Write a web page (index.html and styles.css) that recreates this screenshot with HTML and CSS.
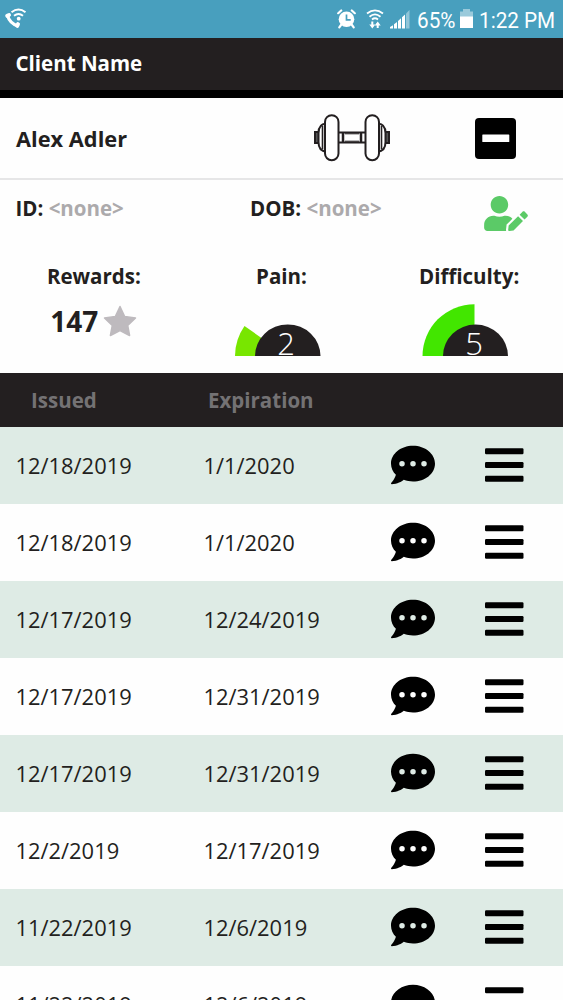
FILE: index.html
```html
<!DOCTYPE html>
<html lang="en">
<head>
<meta charset="utf-8">
<title>Client Name</title>
<link rel="stylesheet" href="styles.css">
</head>
<body>
<svg class="defs" width="0" height="0">
  <symbol id="comment" viewBox="0 0 512 512"><path d="M256 32C114.600 32 0 125.100 0 240c0 49.600 21.400 95 57 130.700C44.500 421.100 2.700 466 2.200 466.500c-2.200 2.300-2.800 5.700-1.500 8.700S4.800 480 8 480c66.300 0 116-31.800 140.600-51.400 32.700 12.300 69 19.400 107.400 19.400 141.400 0 256-93.100 256-208S397.400 32 256 32zM128 272a32 32 0 1 1 0-64 32 32 0 0 1 0 64zm128 0a32 32 0 1 1 0-64 32 32 0 0 1 0 64zm128 0a32 32 0 1 1 0-64 32 32 0 0 1 0 64z"/></symbol>
  <symbol id="bars" viewBox="0 0 39 35"><rect y="0.300" width="38.500" height="6" rx="1.200"/><rect y="14" width="38.500" height="6" rx="1.200"/><rect y="27.700" width="38.500" height="6" rx="1.200"/></symbol>
</svg>
<header class="status">
  <svg class="call" width="24" height="24" viewBox="0 0 24 24" fill="none" stroke="#fff">
    <path d="M3.300 9C4.800 14.500 8.500 18.300 14 20" stroke-width="3"/>
    <path d="M3.200 9.800L5 9M13.200 19.800L14 18.200" stroke-width="4" stroke-linecap="round"/>
    <path d="M7.500 6.200Q14.500 0.800 21.500 6.200" stroke-width="2"/><path d="M10 9.700Q14.500 6.200 19 9.700" stroke-width="2"/>
    <circle cx="14.700" cy="12.700" r="1.900" fill="#fff" stroke="none"/>
  </svg>
  <svg class="alarm" width="19" height="20" viewBox="0 0 19 20">
    <circle cx="9.500" cy="10.300" r="7.800" fill="#fff"/><path d="M9.500 5.500v5.300h4.200" fill="none" stroke="#489fbe" stroke-width="1.700"/>
    <path d="M1.200 4.200L4.200 1.500M14.800 1.500L17.800 4.200M4 16L2.300 18.300M15 16L16.700 18.300" stroke="#fff" stroke-width="2.200" stroke-linecap="round"/>
  </svg>
  <svg class="wifi" width="18" height="20" viewBox="0 0 18 20" fill="none" stroke="#fff" stroke-width="1.800">
    <path d="M1 4.500Q9-1.800 17 4.500M3.500 7.700Q9 3 14.500 7.700M6 10.500Q9 8 12 10.500"/><path d="M6.300 12.500v5M11.700 19v-5" stroke-width="2"/><path d="M3.300 15.500h6L6.300 19.500zM8.700 16.500h6L11.700 12.500z" fill="#fff" stroke="none"/>
  </svg>
  <svg class="signal" width="20" height="19" viewBox="0 0 20 19" fill="#fff">
    <path d="M0 18.500V17l3-1.800v3.300zM4 18.500V14.300l3-2.300v6.500zM8 18.500V11l3-2.700v10.200zM12 18.500V7.300l3-2.800v14z"/><path d="M16 18.500V3.500L19.500 0v18.500z" opacity=".4"/>
  </svg>
  <span class="roboto pct">65%</span>
  <svg class="battery" width="13" height="20" viewBox="0 0 13 20" fill="#fff"><path d="M0 8V2.500h3V0h7v2.500h3V8z" opacity=".45"/><path d="M0 7.500h13V19H0z"/></svg>
  <span class="roboto time">1:22 PM</span>
</header>
<div class="title">Client Name</div>
<main>
  <section class="client">
    <span class="name">Alex Adler</span>
    <svg class="dumbbell" width="76" height="48" viewBox="0 0 76 48" fill="#fff" stroke="#231f20" stroke-width="2">
      <rect x="1" y="18" width="5" height="11" fill="#555"/><rect x="70" y="18" width="5" height="11" fill="#555"/>
      <path d="M12 9.500C6 10 4.500 14 4.500 19v9c0 5 1.500 9 7.500 9.500zM64 9.500c6 .5 7.500 4.500 7.500 9.500v9c0 5-1.500 9-7.500 9.500z"/>
      <path d="M8.500 12v23M67.500 12v23" stroke-width="1.600"/>
      <path d="M24 18.500h28v10H24z"/><path d="M29 18v11M47 18v11" stroke-width="2.500"/><path d="M31 19.800h14M31 27.200h14" stroke-width="1"/>
      <rect x="11" y="1.200" width="13.500" height="45" rx="6.700"/><rect x="51.500" y="1.200" width="13.500" height="45" rx="6.700"/>
    </svg>
    <svg class="minus" width="41" height="41" viewBox="0 0 41 41"><rect width="41" height="41" rx="4"/><rect x="7.300" y="16.500" width="27" height="7.500" rx=".6" fill="#fff"/></svg>
  </section>
  <section class="ids">
    <span class="id">ID: <i>&lt;none&gt;</i></span>
    <span class="dob">DOB: <i>&lt;none&gt;</i></span>
    <svg class="edit" width="44" height="35" viewBox="0 0 640 512" fill="#5bca67"><path d="M224 256c70.700 0 128-57.300 128-128S294.700 0 224 0 96 57.300 96 128s57.300 128 128 128zm89.600 32h-16.700c-22.200 10.200-46.900 16-72.900 16s-50.600-5.800-72.900-16h-16.700C60.200 288 0 348.200 0 422.400V464c0 26.500 21.500 48 48 48h274.900c-2.400-6.800-3.400-14-2.600-21.300l6.800-60.900 1.200-11.100 7.900-7.900 77.300-77.300c-24.500-27.700-60-45.500-99.900-45.500zm45.300 145.300l-6.800 61c-1.100 10.200 7.500 18.800 17.600 17.600l60.900-6.800 137.900-137.900-71.700-71.700-137.900 137.800zM633 268.900L595.100 231c-9.300-9.300-24.500-9.300-33.800 0l-37.800 37.800-4.100 4.100 71.800 71.700 41.800-41.800c9.300-9.400 9.300-24.500 0-33.900z"/></svg>
  </section>
  <section class="stats">
    <div class="stat"><span class="label">Rewards:</span>
      <div class="reward"><span>147</span><svg width="34" height="32" viewBox="0 0 34 32"><path d="M17 1.500L21.700 11.500 32.500 13 24.700 20.500 26.600 30.500 17 25.600 7.400 30.500 9.300 20.500 1.500 13 12.300 11.500z" fill="#bebabe" stroke="#bebabe" stroke-width="1.500" stroke-linejoin="round"/></svg></div></div>
    <div class="stat"><span class="label">Pain:</span>
      <svg class="gauge" width="88" height="64" viewBox="0 0 88 64"><path d="M1 53A53 53 0 0 1 10.500 23L53 53z" fill="#78e600"/><path d="M21 53a32.700 31.500 0 0 1 65.500 0z" fill="#231f20"/><text x="52" y="51.500">2</text></svg></div>
    <div class="stat"><span class="label">Difficulty:</span>
      <svg class="gauge" width="88" height="64" viewBox="0 0 88 64"><path d="M.5 53A52 52 0 0 1 52.500 1.200V53z" fill="#42e600"/><path d="M21 53a32.500 31.500 0 0 1 65 0z" fill="#231f20"/><text x="52" y="51.500">5</text></svg></div>
  </section>
  <div class="thead"><span>Issued</span><span>Expiration</span></div>
  <div class="rows">
    <div class="row"><span>12/18/2019</span><span>1/1/2020</span><svg class="cm"><use href="#comment"/></svg><svg class="br"><use href="#bars"/></svg></div>
    <div class="row"><span>12/18/2019</span><span>1/1/2020</span><svg class="cm"><use href="#comment"/></svg><svg class="br"><use href="#bars"/></svg></div>
    <div class="row"><span>12/17/2019</span><span>12/24/2019</span><svg class="cm"><use href="#comment"/></svg><svg class="br"><use href="#bars"/></svg></div>
    <div class="row"><span>12/17/2019</span><span>12/31/2019</span><svg class="cm"><use href="#comment"/></svg><svg class="br"><use href="#bars"/></svg></div>
    <div class="row"><span>12/17/2019</span><span>12/31/2019</span><svg class="cm"><use href="#comment"/></svg><svg class="br"><use href="#bars"/></svg></div>
    <div class="row"><span>12/2/2019</span><span>12/17/2019</span><svg class="cm"><use href="#comment"/></svg><svg class="br"><use href="#bars"/></svg></div>
    <div class="row"><span>11/22/2019</span><span>12/6/2019</span><svg class="cm"><use href="#comment"/></svg><svg class="br"><use href="#bars"/></svg></div>
    <div class="row"><span>11/22/2019</span><span>12/6/2019</span><svg class="cm"><use href="#comment"/></svg><svg class="br"><use href="#bars"/></svg></div>
  </div>
</main>
</body>
</html>
```
FILE: styles.css
```css
* { box-sizing: border-box; }
body {
  margin: 0;
  height: 1000px;
  overflow: hidden;
  background: #fefefe;
  color: #231f20;
  font-family: "Open Sans", "Noto Sans", sans-serif;
}
svg { display: block; flex: none; }
.defs { position: absolute; }
.status {
  display: flex;
  align-items: center;
  height: 38px;
  padding-left: 4px;
  background: #489fbe;
  color: #fff;
}
.call { margin-top: -2px; }
.alarm { margin-left: 309px; }
.wifi { margin-left: 10px; }
.signal { margin-left: 6px; }
.roboto {
  font: 22.5px/38px Roboto, sans-serif;
  white-space: nowrap;
  transform: scaleX(.92);
  transform-origin: left;
  padding-top: 2px;
}
.pct { width: 43px; margin-left: 6.5px; }
.battery { margin-left: 0; }
.time { width: 83px; margin-left: 6px; }
.title {
  height: 60px;
  padding-left: 15.5px;
  background: #231f20;
  border-bottom: 8px solid #000;
  color: #fff;
  font-size: 20.5px;
  font-weight: 700;
  line-height: 51px;
}
.client {
  display: flex;
  align-items: center;
  height: 82px;
  padding-left: 16px;
  border-bottom: 2px solid #e6e6e7;
  font-size: 21.8px;
  font-weight: 700;
}
.name { width: 298px; }
.minus { margin-left: 85px; }
.ids {
  display: flex;
  height: 70px;
  padding: 14px 0 0 15.5px;
  font-size: 20.5px;
  font-weight: 700;
  line-height: 28px;
}
.ids i { color: #acaaac; font-style: normal; }
.id { width: 234.5px; }
.dob { width: 234px; }
.edit { margin-top: 2px; }
.stats {
  display: grid;
  grid-template-columns: 187.67px 187.67px 187.66px;
  height: 123px;
  padding-top: 12px;
}
.stat { display: flex; flex-direction: column; align-items: center; }
.label { font-size: 20.5px; font-weight: 700; line-height: 28px; }
.reward {
  display: flex;
  align-items: center;
  gap: 5px;
  margin-top: 15px;
  font-size: 28px;
  font-weight: 700;
  line-height: 32px;
}
.gauge { margin: 13px 0 0 -7px; }
.gauge text { fill: #fff; font-size: 31px; font-weight: 350; text-anchor: middle; }
.thead {
  display: grid;
  grid-template-columns: 177px 1fr;
  height: 54px;
  padding-left: 31px;
  background: #231f20;
  color: #747274;
  font-size: 20.5px;
  font-weight: 700;
  line-height: 54px;
}
.row {
  display: grid;
  grid-template-columns: 188px 187.500px 94px 1fr;
  align-items: center;
  height: 77px;
  padding: 0 0 2px 15.5px;
  font-size: 21.9px;
}
.row:nth-child(odd) { background: #deebe5; }
.row span { padding-top: 2px; }
.cm { width: 44px; height: 44px; fill: #000; }
.br { width: 39px; height: 35px; margin-top: 1px; fill: #000; }
```
